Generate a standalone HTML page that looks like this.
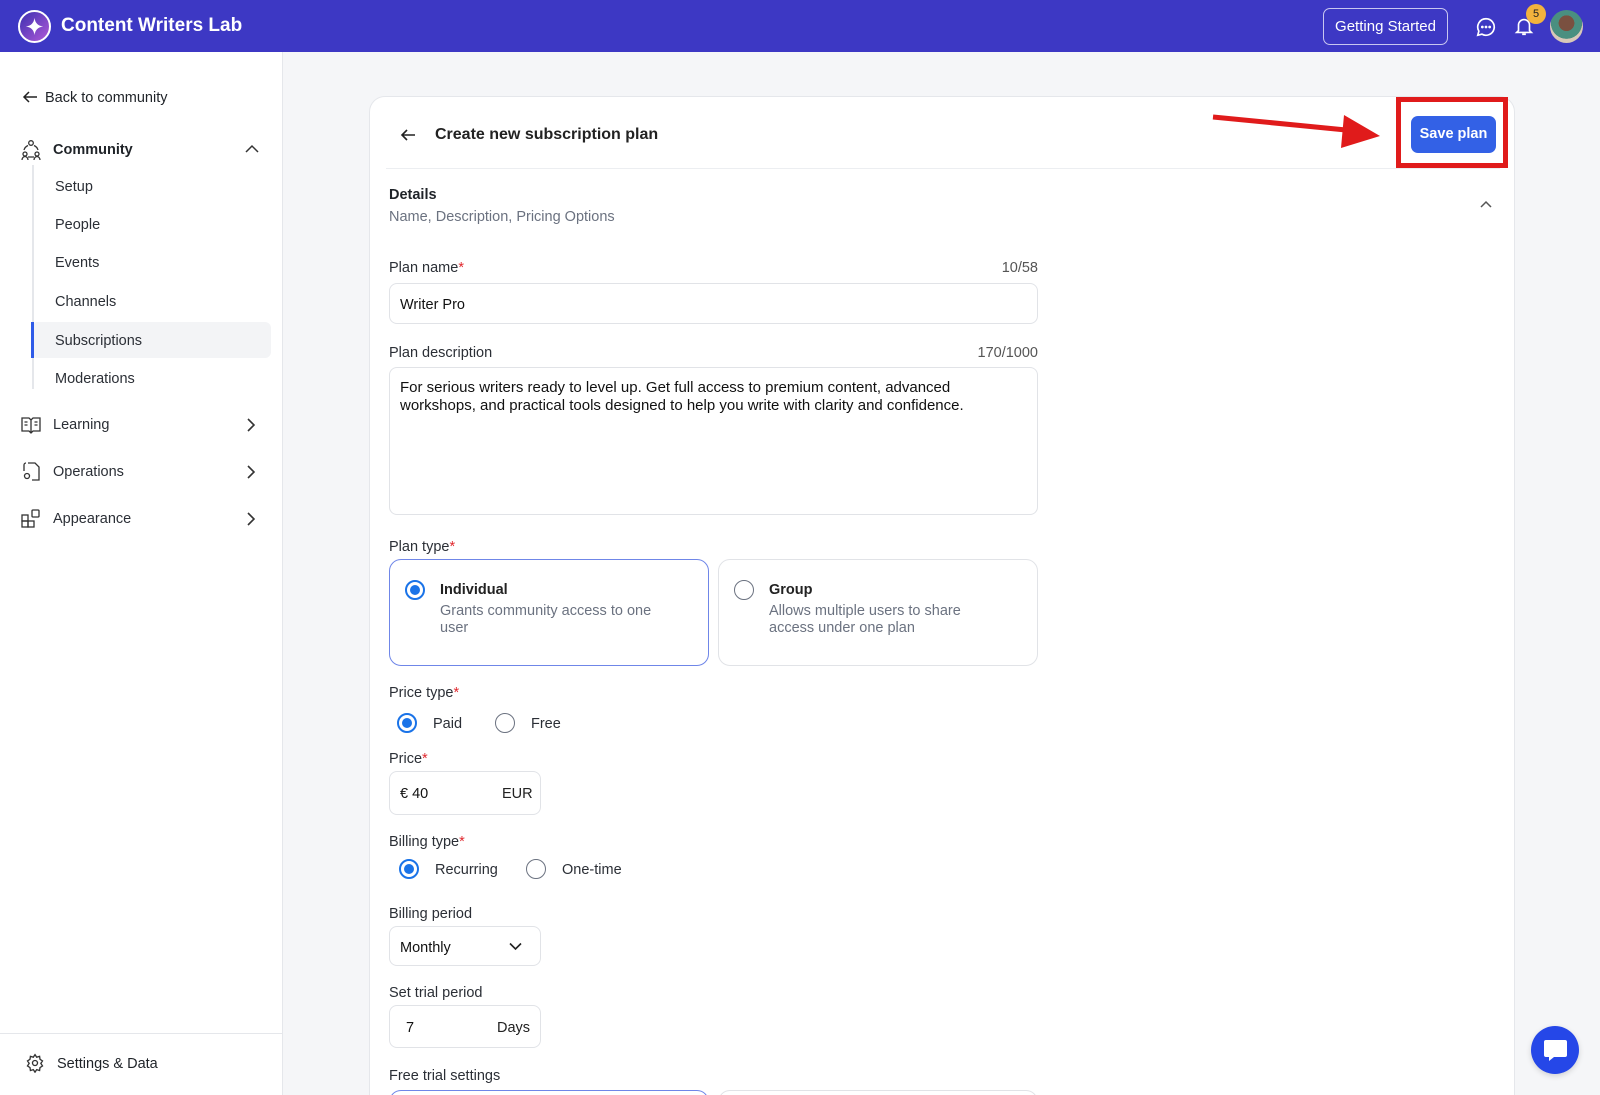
<!DOCTYPE html>
<html><head><meta charset="utf-8"><style>
*{box-sizing:border-box;margin:0;padding:0}
html{width:1600px;height:1095px;overflow:hidden}
body{width:1600px;height:1095px;overflow:hidden;font-family:"Liberation Sans",sans-serif;background:#f5f6f8;color:#1f2328;position:relative;font-size:14.5px}
.abs{position:absolute}
.top{position:absolute;left:0;top:0;width:1600px;height:52px;background:#3d38c4}
.side{position:absolute;left:0;top:52px;width:283px;height:1043px;background:#fff;border-right:1px solid #e5e7eb}
.card{position:absolute;left:369px;top:96px;width:1146px;height:1040px;background:#fff;border:1px solid #e5e7eb;border-radius:16px}
.lbl{position:absolute;font-size:14.5px;color:#2b2f36}
.req{color:#e0282e}
.box{position:absolute;border:1px solid #e1e3e7;border-radius:8px;background:#fff}
.radio{position:absolute;width:20px;height:20px;border-radius:50%;border:1.5px solid #6b7280;background:#fff}
.radio.on{border:2px solid #1a73e8}
.radio.on::after{content:"";position:absolute;left:3px;top:3px;width:10px;height:10px;border-radius:50%;background:#1a73e8}
.nav{position:absolute;left:55px;font-size:14.5px;color:#2b2f36}
.gray{color:#6b7280}
</style></head><body>
<div class="top">
  <div class="abs" style="left:18px;top:10px;width:33px;height:33px;border-radius:50%;background:linear-gradient(135deg,#3c2fb0,#b05ad8);border:2px solid #fff"></div>
  <svg class="abs" style="left:23px;top:15px" width="23" height="23" viewBox="0 0 24 24"><path d="M12 3 Q13 11 21 12 Q13 13 12 21 Q11 13 3 12 Q11 11 12 3Z" fill="#fff"/></svg>
  <div class="abs" style="left:61px;top:15px;color:#fff;font-weight:bold;font-size:19px">Content Writers Lab</div>
  <div class="abs" style="left:1323px;top:8px;width:125px;height:37px;border:1px solid #c9c7f0;border-radius:7px;color:#fff;font-size:15px;text-align:center;line-height:35px">Getting Started</div>
  <svg class="abs" style="left:1475px;top:16px" width="22" height="22" viewBox="0 0 24 24" fill="none" stroke="#fff" stroke-width="1.8"><path d="M12 3a9 9 0 0 0-7.8 13.5L3 21l4.5-1.2A9 9 0 1 0 12 3z"/><circle cx="8" cy="12" r=".6" fill="#fff"/><circle cx="12" cy="12" r=".6" fill="#fff"/><circle cx="16" cy="12" r=".6" fill="#fff"/></svg>
  <svg class="abs" style="left:1513px;top:14px" width="22" height="24" viewBox="0 0 24 24" fill="none" stroke="#fff" stroke-width="1.8"><path d="M6 17V11a6 6 0 0 1 12 0v6l2 2H4z M10 21h4"/></svg>
  <div class="abs" style="left:1526px;top:4px;width:20px;height:20px;border-radius:50%;background:#f3b33d;color:#222;font-size:11px;text-align:center;line-height:20px">5</div>
  <div class="abs" style="left:1550px;top:10px;width:33px;height:33px;border-radius:50%;background:radial-gradient(circle at 50% 40%,#7a5040 0 30%,#4a8f80 31% 60%,#d9c8b8 61%)"></div>
</div>
<div class="side">
  <svg class="abs" style="left:22px;top:37px" width="16" height="16" viewBox="0 0 16 16" fill="none" stroke="#222" stroke-width="1.5"><path d="M15 8H2M7 3L2 8l5 5"/></svg>
  <div class="abs" style="left:45px;top:38px;font-size:14.5px">Back to community</div>
  <svg class="abs" style="left:20px;top:87px" width="22" height="22" viewBox="0 0 22 22" fill="none" stroke="#333" stroke-width="1.3"><circle cx="11" cy="4" r="2.3"/><circle cx="5" cy="15" r="2"/><circle cx="17" cy="15" r="2"/><path d="M2 21c0-2 1.5-3.5 3-3.5s3 1.5 3 3.5M14 21c0-2 1.5-3.5 3-3.5s3 1.5 3 3.5M4 11a7 7 0 0 1 4-4.5M18 11a7 7 0 0 0-4-4.5M8 18h6"/></svg>
  <div class="abs" style="left:53px;top:90px;font-weight:bold;font-size:14.5px">Community</div>
  <svg class="abs" style="left:244px;top:90px" width="16" height="14" viewBox="0 0 16 14" fill="none" stroke="#333" stroke-width="1.5"><path d="M2 10l6-6 6 6"/></svg>
  <div class="abs" style="left:32px;top:113px;width:2px;height:224px;background:#e5e7eb"></div>
  <div class="abs" style="left:31px;top:270px;width:240px;height:36px;background:#f3f4f6;border-radius:6px"></div>
  <div class="abs" style="left:31px;top:270px;width:3px;height:36px;background:#2f5be8"></div>
  <div class="nav" style="top:127px">Setup</div>
  <div class="nav" style="top:165px">People</div>
  <div class="nav" style="top:203px">Events</div>
  <div class="nav" style="top:242px">Channels</div>
  <div class="nav" style="top:281px">Subscriptions</div>
  <div class="nav" style="top:319px">Moderations</div>
  <svg class="abs" style="left:21px;top:364px" width="20" height="18" viewBox="0 0 20 18" fill="none" stroke="#333" stroke-width="1.3"><path d="M1 2h7l2 2 2-2h7v13h-7l-2 2-2-2H1zM10 4v13M3.5 6h3M3.5 9h3M13.5 6h3M13.5 9h3"/></svg>
  <div class="nav" style="left:53px;top:365px">Learning</div>
  <svg class="abs" style="left:246px;top:366px" width="10" height="14" viewBox="0 0 10 14" fill="none" stroke="#333" stroke-width="1.6"><path d="M2 1l6 6-6 6"/></svg>
  <svg class="abs" style="left:21px;top:410px" width="20" height="20" viewBox="0 0 20 20" fill="none" stroke="#333" stroke-width="1.3"><path d="M7 1h7l4 4v13H11M3 9V3a2 2 0 0 1 2-2"/><circle cx="6" cy="14" r="2.5"/></svg>
  <div class="nav" style="left:53px;top:412px">Operations</div>
  <svg class="abs" style="left:246px;top:413px" width="10" height="14" viewBox="0 0 10 14" fill="none" stroke="#333" stroke-width="1.6"><path d="M2 1l6 6-6 6"/></svg>
  <svg class="abs" style="left:21px;top:457px" width="19" height="19" viewBox="0 0 19 19" fill="none" stroke="#333" stroke-width="1.3"><rect x="1" y="6" width="6" height="6"/><rect x="1" y="12" width="6" height="6"/><rect x="7" y="12" width="6" height="6"/><rect x="11" y="1" width="7" height="7" rx="1"/></svg>
  <div class="nav" style="left:53px;top:459px">Appearance</div>
  <svg class="abs" style="left:246px;top:460px" width="10" height="14" viewBox="0 0 10 14" fill="none" stroke="#333" stroke-width="1.6"><path d="M2 1l6 6-6 6"/></svg>
  <div class="abs" style="left:0;top:981px;width:283px;height:1px;background:#e5e7eb"></div>
  <svg class="abs" style="left:25px;top:1001px" width="20" height="20" viewBox="0 0 24 24" fill="none" stroke="#333" stroke-width="1.6"><circle cx="12" cy="12" r="3"/><path d="M12 2l2 3 3.5-1 .5 3.5 3 2-2 3 2 3-3 2-.5 3.5-3.5-1-2 3-2-3-3.5 1-.5-3.5-3-2 2-3-2-3 3-2L6.5 4 10 5z"/></svg>
  <div class="abs" style="left:57px;top:1004px">Settings &amp; Data</div>
</div>
<div class="card">
  <svg class="abs" style="left:30px;top:30px" width="16" height="16" viewBox="0 0 16 16" fill="none" stroke="#222" stroke-width="1.6"><path d="M15 8H2M7 3L2 8l5 5"/></svg>
  <div class="abs" style="left:65px;top:29px;font-weight:bold;font-size:16px;color:#222">Create new subscription plan</div>
  <div class="abs" style="left:16px;top:71px;width:1114px;height:1px;background:#eceef1"></div>
  <div class="abs" style="left:19px;top:90px;font-weight:bold;font-size:14.5px">Details</div>
  <div class="abs gray" style="left:19px;top:112px">Name, Description, Pricing Options</div>
  <svg class="abs" style="left:1110px;top:103px" width="12" height="8" viewBox="0 0 12 8" fill="none" stroke="#555" stroke-width="1.5"><path d="M1 7l5-5 5 5"/></svg>
</div>
<div class="lbl" style="left:389px;top:260px">Plan name<span class="req">*</span></div>
<div class="lbl gray" style="left:990px;top:260px;width:48px;text-align:right;color:#555">10/58</div>
<div class="box" style="left:389px;top:283px;width:649px;height:41px"></div>
<div class="lbl" style="left:400px;top:297px;color:#111">Writer Pro</div>
<div class="lbl" style="left:389px;top:345px">Plan description</div>
<div class="lbl" style="left:960px;top:345px;width:78px;text-align:right;color:#555">170/1000</div>
<div class="box" style="left:389px;top:367px;width:649px;height:148px"></div>
<div class="lbl" style="left:400px;top:379px;width:625px;line-height:18px;color:#111;font-size:15px">For serious writers ready to level up. Get full access to premium content, advanced workshops, and practical tools designed to help you write with clarity and confidence.</div>
<div class="lbl" style="left:389px;top:539px">Plan type<span class="req">*</span></div>
<div class="box" style="left:389px;top:559px;width:320px;height:107px;border:1.5px solid #6f86e8;border-radius:12px"></div>
<div class="radio on" style="left:405px;top:580px"></div>
<div class="lbl" style="left:440px;top:582px;font-weight:bold;color:#222">Individual</div>
<div class="lbl gray" style="left:440px;top:603px;width:240px;line-height:17px">Grants community access to one user</div>
<div class="box" style="left:718px;top:559px;width:320px;height:107px;border-radius:12px"></div>
<div class="radio" style="left:734px;top:580px"></div>
<div class="lbl" style="left:769px;top:582px;font-weight:bold;color:#222">Group</div>
<div class="lbl gray" style="left:769px;top:603px;width:240px;line-height:17px">Allows multiple users to share access under one plan</div>
<div class="lbl" style="left:389px;top:685px">Price type<span class="req">*</span></div>
<div class="radio on" style="left:397px;top:713px"></div>
<div class="lbl" style="left:433px;top:716px">Paid</div>
<div class="radio" style="left:495px;top:713px"></div>
<div class="lbl" style="left:531px;top:716px">Free</div>
<div class="lbl" style="left:389px;top:751px">Price<span class="req">*</span></div>
<div class="box" style="left:389px;top:771px;width:152px;height:44px"></div>
<div class="lbl" style="left:400px;top:786px;color:#111">€ 40</div>
<div class="lbl" style="left:502px;top:786px;color:#222">EUR</div>
<div class="lbl" style="left:389px;top:834px">Billing type<span class="req">*</span></div>
<div class="radio on" style="left:399px;top:859px"></div>
<div class="lbl" style="left:435px;top:862px">Recurring</div>
<div class="radio" style="left:526px;top:859px"></div>
<div class="lbl" style="left:562px;top:862px">One-time</div>
<div class="lbl" style="left:389px;top:906px">Billing period</div>
<div class="box" style="left:389px;top:926px;width:152px;height:40px"></div>
<div class="lbl" style="left:400px;top:940px;color:#111">Monthly</div>
<svg class="abs" style="left:509px;top:942px" width="13" height="9" viewBox="0 0 13 9" fill="none" stroke="#222" stroke-width="1.6"><path d="M1 1.5l5.5 5.5 5.5-5.5"/></svg>
<div class="lbl" style="left:389px;top:985px">Set trial period</div>
<div class="box" style="left:389px;top:1005px;width:152px;height:43px"></div>
<div class="lbl" style="left:406px;top:1020px;color:#111">7</div>
<div class="lbl" style="left:497px;top:1020px;color:#222">Days</div>
<div class="lbl" style="left:389px;top:1068px">Free trial settings</div>
<div class="box" style="left:389px;top:1090px;width:320px;height:40px;border:1.5px solid #6f86e8;border-radius:12px"></div>
<div class="box" style="left:718px;top:1090px;width:320px;height:40px;border-radius:12px"></div>
<!-- annotation -->
<div class="abs" style="left:1396px;top:97px;width:112px;height:71px;border:5px solid #e01b1b"></div>
<div class="abs" style="left:1411px;top:116px;width:85px;height:37px;background:#3361e6;border-radius:7px;color:#fff;font-weight:bold;font-size:14.5px;text-align:center;line-height:37px">Save plan</div>
<svg class="abs" style="left:1210px;top:110px" width="175" height="45" viewBox="0 0 175 45"><path d="M3 7L136 20" stroke="#e01b1b" stroke-width="5"/><path d="M134 5L170 26L131 38Z" fill="#e01b1b"/></svg>
<div class="abs" style="left:1531px;top:1026px;width:48px;height:48px;border-radius:50%;background:#2547e8;box-shadow:0 2px 6px rgba(0,0,0,.15)"></div>
<svg class="abs" style="left:1543px;top:1039px" width="25" height="24" viewBox="0 0 25 24"><path d="M3 1h19a2 2 0 0 1 2 2v13a2 2 0 0 1-2 2H11l-5 4v-4H3a2 2 0 0 1-2-2V3a2 2 0 0 1 2-2z" fill="#fff"/></svg>
</body></html>
